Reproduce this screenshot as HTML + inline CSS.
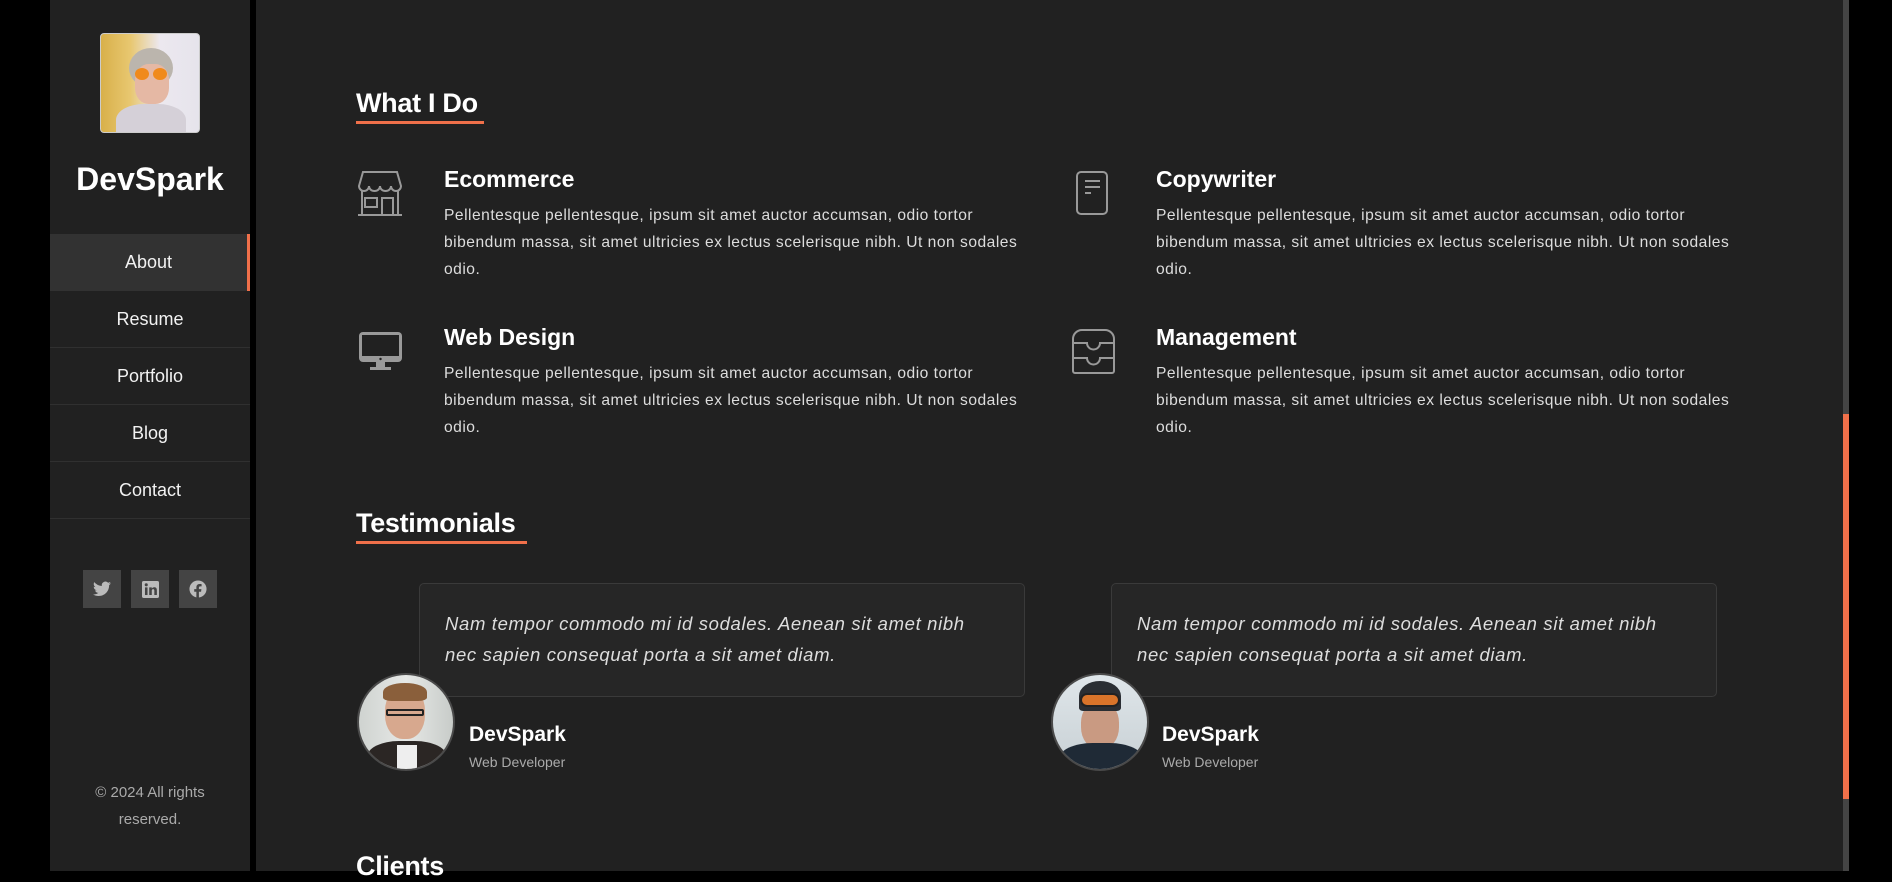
<!DOCTYPE html>
<html><head><meta charset="utf-8"><style>
*{margin:0;padding:0;box-sizing:border-box}
body{width:1892px;height:871px;background:#000;position:relative;overflow:hidden;font-family:"Liberation Sans",sans-serif;color:#eee}
.a{position:absolute}
#side{left:50px;top:0;width:200px;height:871px;background:#212121}
#main{left:256px;top:0;width:1587px;height:871px;background:#212121}
.nav{position:absolute;left:50px;width:200px;height:57px;line-height:56px;text-align:center;font-size:18px;color:#f2f2f2;border-bottom:1px solid #303030}
.nav.act{background:#323232;border-right:3px solid #f0704a}
.soc{position:absolute;top:570px;width:38px;height:38px;background:#444;display:flex;align-items:center;justify-content:center}
h2{position:absolute;font-size:27px;font-weight:bold;color:#fff;letter-spacing:-0.3px}
.ul{position:absolute;height:3px;background:#f0704a}
.t{position:absolute;font-size:23px;font-weight:bold;color:#fff}
.p{position:absolute;width:600px;font-size:15.6px;line-height:27px;color:#ddd;letter-spacing:0.5px;white-space:nowrap}
.box{position:absolute;width:606px;height:114px;border:1px solid #3a3a3a;border-radius:5px;background:#262626;padding:24px 25px;font-style:italic;font-size:18.5px;line-height:31px;color:#ddd;letter-spacing:0.65px;white-space:nowrap}
.av{position:absolute;width:98px;height:98px;border-radius:50%;border:2px solid #4a4a4a;overflow:hidden}
.nm{position:absolute;font-size:21px;font-weight:bold;color:#fff}
.rl{position:absolute;font-size:14px;color:#aaa}
</style></head><body>
<div class="a" id="side"></div>
<div class="a" id="main"></div>
<div class="a" style="left:1843px;top:0;width:6px;height:871px;background:#444"></div>
<div class="a" style="left:1843px;top:414px;width:6px;height:385px;background:#f0704a"></div>

<div class="a" style="left:100px;top:33px;width:100px;height:100px;border-radius:4px;border:1px solid #ccc;overflow:hidden;background:linear-gradient(90deg,#d8b04a 0%,#e8c770 30%,#ece8ef 60%,#e6e4ec 100%)">
 <div class="a" style="left:28px;top:14px;width:44px;height:40px;border-radius:50%;background:#bbb5ad"></div>
 <div class="a" style="left:34px;top:30px;width:34px;height:40px;border-radius:40%;background:#e5b8a4"></div>
 <div class="a" style="left:34px;top:34px;width:14px;height:12px;border-radius:50%;background:#f08a1c"></div>
 <div class="a" style="left:52px;top:34px;width:14px;height:12px;border-radius:50%;background:#f08a1c"></div>
 <div class="a" style="left:15px;top:70px;width:70px;height:40px;border-radius:40% 40% 0 0;background:#d5d0d8"></div>
</div>
<div class="a" style="left:50px;top:161px;width:200px;text-align:center;font-size:32px;font-weight:bold;color:#fff">DevSpark</div>

<div class="nav act" style="top:234px;border-bottom:none">About</div>
<div class="nav" style="top:291px">Resume</div>
<div class="nav" style="top:348px">Portfolio</div>
<div class="nav" style="top:405px">Blog</div>
<div class="nav" style="top:462px">Contact</div>

<div class="soc" style="left:83px"><svg width="18" height="16" viewBox="0 0 24 20"><path fill="#bbb" d="M24 2.4a9.8 9.8 0 0 1-2.8.8A4.9 4.9 0 0 0 23.3.5a9.9 9.9 0 0 1-3.1 1.2A4.9 4.9 0 0 0 11.8 6 14 14 0 0 1 1.7.9a4.9 4.9 0 0 0 1.5 6.6A4.9 4.9 0 0 1 1 6.9a4.9 4.9 0 0 0 3.9 4.8 4.9 4.9 0 0 1-2.2.1 4.9 4.9 0 0 0 4.6 3.4A9.9 9.9 0 0 1 0 17.2 14 14 0 0 0 7.5 19.4c9.1 0 14-7.5 14-14v-.6A10 10 0 0 0 24 2.4z"/></svg></div>
<div class="soc" style="left:131px"><svg width="17" height="17" viewBox="0 0 20 20"><rect x="0" y="0" width="20" height="20" rx="2" fill="#bbb"/><rect x="3.5" y="7.5" width="3" height="9" fill="#444"/><circle cx="5" cy="4.5" r="1.8" fill="#444"/><path fill="#444" d="M8.5 7.5h3v1.4c.6-1 1.6-1.6 3-1.6 2.3 0 3 1.5 3 3.7v5.5h-3v-5c0-1.2-.3-2-1.4-2s-1.6.8-1.6 2v5h-3z"/></svg></div>
<div class="soc" style="left:179px"><svg width="18" height="18" viewBox="0 0 20 20"><circle cx="10" cy="10" r="9.5" fill="#bbb"/><path fill="#444" d="M11 20v-7h2.4l.4-2.8H11V8.5c0-.8.3-1.4 1.4-1.4H14V4.6c-.3 0-1.2-.1-2.2-.1-2.2 0-3.600 1.3-3.6 3.7v2H5.8V13h2.4v7z"/></svg></div>

<div class="a" style="left:50px;top:779px;width:200px;text-align:center;font-size:15px;line-height:27px;color:#aaa">© 2024 All rights<br>reserved.</div>

<h2 style="left:356px;top:88px">What I Do</h2>
<div class="ul" style="left:356px;top:121px;width:128px"></div>

<svg class="a" style="left:357px;top:170px" width="46" height="46" viewBox="0 0 46 46" fill="none" stroke="#999" stroke-width="2"><path d="M6 2h34l4 14c0 3-2.5 5-5 5s-5-2-5-5c0 3-2.5 5-5.5 5S23 19 23 16c0 3-2.5 5-5.5 5S12 19 12 16c0 3-2.5 5-5 5s-5-2-5-5z"/><path d="M5 21v24M41 21v24M1 45h44M8 28h12v9H8zM25 45V28h11v17"/></svg>
<svg class="a" style="left:1075px;top:170px" width="34" height="46" viewBox="0 0 34 46" fill="none" stroke="#999" stroke-width="2"><rect x="2" y="2" width="30" height="42" rx="4"/><path d="M10 11h15M10 17h15M10 23h6"/></svg>
<svg class="a" style="left:357px;top:330px" width="47" height="42" viewBox="0 0 47 42"><rect x="2" y="2" width="43" height="30" rx="4" fill="#999"/><rect x="5" y="5" width="37" height="21" fill="#212121"/><circle cx="23.5" cy="29" r="1.2" fill="#212121"/><path d="M19 32h9v5h-9zM13 37h21v3H13z" fill="#999"/></svg>
<svg class="a" style="left:1071px;top:327px" width="45" height="48" viewBox="0 0 45 48" fill="none" stroke="#999" stroke-width="2"><path d="M2 12a9 9 0 0 1 9-9h23a9 9 0 0 1 9 9v32a2 2 0 0 1-2 2H4a2 2 0 0 1-2-2z"/><path d="M2 16h14a6 6 0 0 0 13 0h14M2 31h14a6 6 0 0 0 13 0h14"/></svg>

<div class="t" style="left:444px;top:166px">Ecommerce</div>
<div class="p" style="left:444px;top:202px">Pellentesque pellentesque, ipsum sit amet auctor accumsan, odio tortor<br>bibendum massa, sit amet ultricies ex lectus scelerisque nibh. Ut non sodales<br>odio.</div>
<div class="t" style="left:1156px;top:166px">Copywriter</div>
<div class="p" style="left:1156px;top:202px">Pellentesque pellentesque, ipsum sit amet auctor accumsan, odio tortor<br>bibendum massa, sit amet ultricies ex lectus scelerisque nibh. Ut non sodales<br>odio.</div>
<div class="t" style="left:444px;top:324px">Web Design</div>
<div class="p" style="left:444px;top:360px">Pellentesque pellentesque, ipsum sit amet auctor accumsan, odio tortor<br>bibendum massa, sit amet ultricies ex lectus scelerisque nibh. Ut non sodales<br>odio.</div>
<div class="t" style="left:1156px;top:324px">Management</div>
<div class="p" style="left:1156px;top:360px">Pellentesque pellentesque, ipsum sit amet auctor accumsan, odio tortor<br>bibendum massa, sit amet ultricies ex lectus scelerisque nibh. Ut non sodales<br>odio.</div>

<h2 style="left:356px;top:508px">Testimonials</h2>
<div class="ul" style="left:356px;top:541px;width:171px"></div>

<div class="box" style="left:419px;top:583px">Nam tempor commodo mi id sodales. Aenean sit amet nibh<br>nec sapien consequat porta a sit amet diam.</div>
<div class="av" style="left:357px;top:673px;background:linear-gradient(90deg,#cfd3d0,#e6e8e6 50%,#c8ccc9)">
 <div class="a" style="left:26px;top:12px;width:40px;height:52px;border-radius:45%;background:#d7a88e"></div>
 <div class="a" style="left:24px;top:8px;width:44px;height:18px;border-radius:50% 50% 20% 20%;background:#8a5f3b"></div>
 <div class="a" style="left:27px;top:34px;width:38px;height:7px;border:2px solid #222;border-radius:2px"></div>
 <div class="a" style="left:8px;top:66px;width:80px;height:40px;border-radius:40% 40% 0 0;background:#2b2624"></div>
 <div class="a" style="left:38px;top:70px;width:20px;height:30px;background:#eee"></div>
</div>
<div class="nm" style="left:469px;top:723px">DevSpark</div>
<div class="rl" style="left:469px;top:754px">Web Developer</div>

<div class="box" style="left:1111px;top:583px">Nam tempor commodo mi id sodales. Aenean sit amet nibh<br>nec sapien consequat porta a sit amet diam.</div>
<div class="av" style="left:1051px;top:673px;background:linear-gradient(180deg,#dfe6ea,#c8d0d4)">
 <div class="a" style="left:28px;top:26px;width:38px;height:48px;border-radius:45%;background:#c99a82"></div>
 <div class="a" style="left:26px;top:6px;width:42px;height:30px;border-radius:50% 50% 10% 10%;background:#2a2e33"></div>
 <div class="a" style="left:27px;top:18px;width:40px;height:14px;border-radius:8px;background:#d9742a;border:2px solid #222"></div>
 <div class="a" style="left:6px;top:68px;width:84px;height:40px;border-radius:40% 40% 0 0;background:#1f2a36"></div>
</div>
<div class="nm" style="left:1162px;top:723px">DevSpark</div>
<div class="rl" style="left:1162px;top:754px">Web Developer</div>

<h2 style="left:356px;top:851px">Clients</h2>
</body></html>
